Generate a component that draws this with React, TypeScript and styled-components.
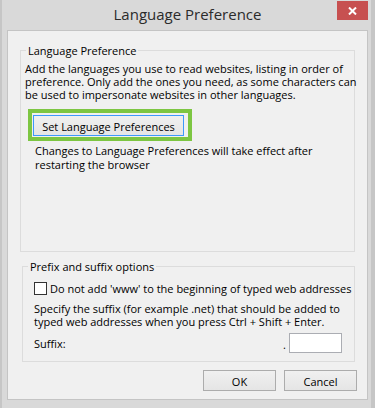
import React from "react";
import styled, { createGlobalStyle } from "styled-components";

const Global = createGlobalStyle`
  html, body { margin: 0; padding: 0; background: #ffffff; }
  body { font-family: "Open Sans", "Noto Sans", sans-serif; }
  *, *::before, *::after { box-sizing: border-box; }
`;

const FONT = `"Open Sans", "Noto Sans", "DejaVu Sans", sans-serif`;

const Window = styled.div`
  width: 375px;
  height: 408px;
  background: #d9d9d9;
  border-left: 2px solid #c6c6c6;
  border-right: 4px solid #c6c6c6;
  padding: 0 3px 8px 5px;
  display: flex;
  flex-direction: column;
  font-family: ${FONT};
  font-size: 11px;
  color: #000;
`;

const TitleBar = styled.div`
  height: 30px;
  flex: none;
  display: grid;
  grid-template-columns: 1fr auto 1fr;
  align-items: start;
`;

const Title = styled.div`
  grid-column: 2;
  font-size: 15px;
  line-height: 29px;
  color: #2b2b2b;
  white-space: nowrap;
`;

const CloseButton = styled.div`
  grid-column: 3;
  justify-self: end;
  margin-top: 1px;
  width: 31px;
  height: 19px;
  background: #c75050;
  display: flex;
  align-items: center;
  justify-content: center;
`;

const Client = styled.div`
  flex: 1;
  background: #f0f0f0;
  border: 1px solid #c4c4c4;
  display: flex;
  flex-direction: column;
  padding: 13px 10px 8px 12px;
`;

const GroupBox = styled.fieldset<{ $indent?: number; $gap?: number }>`
  margin: ${(p) => p.$gap ?? 0}px 2px 0 ${(p) => p.$indent ?? 0}px;
  padding: 0;
  border: 1px solid #dcdcdc;
  min-inline-size: 0;
`;

const Legend = styled.legend`
  margin-left: 5px;
  padding: 0 2px;
  font-size: 11px;
  line-height: 13px;
  white-space: nowrap;
`;

const GroupBody = styled.div<{ $pad: string }>`
  padding: ${(p) => p.$pad};
  display: flex;
  flex-direction: column;
  align-items: flex-start;
`;

const Para = styled.p<{ $lh?: number; $mt?: number; $ml?: number }>`
  margin: ${(p) => p.$mt ?? 0}px 0 0 ${(p) => p.$ml ?? 0}px;
  line-height: ${(p) => p.$lh ?? 13}px;
  white-space: nowrap;
`;

const Highlight = styled.div`
  margin: 8px 0 0 3px;
  border: 4px solid #7dc642;
  padding: 2px 4px 1px 1px;
  display: flex;
`;

const PushButton = styled.button<{ $focused?: boolean; $w?: number }>`
  height: 21px;
  ${(p) => (p.$w ? `width: ${p.$w}px;` : "padding: 0 11px;")}
  border: 1px solid ${(p) => (p.$focused ? "#3c99fc" : "#acacac")};
  background: linear-gradient(#f0f0f0, #e5e5e5);
  font-family: ${FONT};
  font-size: 11px;
  color: #000;
  line-height: 19px;
  white-space: nowrap;
  cursor: default;
`;

const CheckRow = styled.label`
  display: flex;
  align-items: center;
  gap: 3px;
  height: 14px;
  white-space: nowrap;
`;

const CheckBox = styled.span`
  width: 13px;
  height: 13px;
  border: 1px solid #333333;
  background: #ffffff;
  flex: none;
`;

const SuffixRow = styled.div`
  margin-top: 5px;
  align-self: stretch;
  display: flex;
  align-items: center;
  justify-content: space-between;
`;

const SuffixInputWrap = styled.div`
  display: flex;
  align-items: flex-end;
  gap: 3px;
`;

const Dot = styled.span`
  line-height: 13px;
  margin-bottom: 2px;
`;

const SuffixInput = styled.div`
  width: 53px;
  height: 20px;
  border: 1px solid #abadb3;
  background: #ffffff;
`;

const ButtonRow = styled.div`
  margin-top: auto;
  display: flex;
  justify-content: flex-end;
  gap: 8px;
`;

export default function App() {
  return (
    <>
      <Global />
      <Window>
        <TitleBar>
          <Title>Language Preference</Title>
          <CloseButton>
            <svg width="9" height="8" viewBox="0 0 9 8">
              <path d="M1 0.5 L8 7.5 M8 0.5 L1 7.5" stroke="#ffffff" strokeWidth="2" fill="none" />
            </svg>
          </CloseButton>
        </TitleBar>
        <Client>
          <GroupBox>
            <Legend>Language Preference</Legend>
            <GroupBody $pad="5px 4px 79px 4px">
              <Para>
                Add the languages you use to read websites, listing in order of
                <br />
                preference. Only add the ones you need, as some characters can
                <br />
                be used to impersonate websites in other languages.
              </Para>
              <Highlight>
                <PushButton $focused $w={151}>Set Language Preferences</PushButton>
              </Highlight>
              <Para $lh={14} $mt={3} $ml={10}>
                Changes to Language Preferences will take effect after
                <br />
                restarting the browser
              </Para>
            </GroupBody>
          </GroupBox>
          <GroupBox $indent={2} $gap={8}>
            <Legend>Prefix and suffix options</Legend>
            <GroupBody $pad="8px 12px 8px 11px">
              <CheckRow>
                <CheckBox />
                Do not add 'www' to the beginning of typed web addresses
              </CheckRow>
              <Para $mt={7}>
                Specify the suffix (for example .net) that should be added to
                <br />
                typed web addresses when you press Ctrl + Shift + Enter.
              </Para>
              <SuffixRow>
                <span>Suffix:</span>
                <SuffixInputWrap>
                  <Dot>.</Dot>
                  <SuffixInput />
                </SuffixInputWrap>
              </SuffixRow>
            </GroupBody>
          </GroupBox>
          <ButtonRow>
            <PushButton $w={73}>OK</PushButton>
            <PushButton $w={73}>Cancel</PushButton>
          </ButtonRow>
        </Client>
      </Window>
    </>
  );
}
